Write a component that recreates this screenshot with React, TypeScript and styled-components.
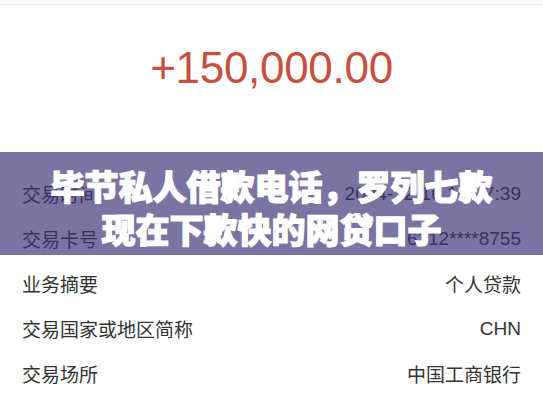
import React from 'react';
import styled, { createGlobalStyle } from 'styled-components';

type DetailRowType = {
  label: string;
  value: string;
};

const GlobalStyle = createGlobalStyle`
  html, body {
    margin: 0;
    padding: 0;
    overflow: hidden;
    background: #ffffff;
  }
`;

const Page = styled.div`
  position: relative;
  width: 543px;
  height: 408px;
  overflow: hidden;
  background: #ffffff;
  font-family: "Liberation Sans", "Noto Sans CJK SC", sans-serif;
`;

const TopBar = styled.div`
  height: 4px;
  border-bottom: 1px solid #ececec;
  background: #fbfbfb;
`;

const AmountSection = styled.div`
  height: 166px;
  box-sizing: border-box;
  padding-top: 41px;
  text-align: center;
`;

const Amount = styled.div`
  font-size: 44px;
  line-height: 44px;
  color: #c5503f;
  letter-spacing: -0.3px;
`;

const Details = styled.div`
  display: flex;
  flex-direction: column;
`;

const Row = styled.div`
  height: 45px;
  padding: 0 22px;
  display: flex;
  align-items: center;
  justify-content: space-between;
  font-size: 19px;
  color: #333333;
`;

const Label = styled.span`
  font-family: "Noto Sans CJK SC", sans-serif;
`;

const Value = styled.span`
  font-family: "Liberation Sans", "Noto Sans CJK SC", sans-serif;
`;

const Banner = styled.div`
  position: absolute;
  left: 0;
  right: 0;
  top: 152px;
  height: 103px;
  box-sizing: border-box;
  padding-top: 12px;
  background: rgba(61, 49, 117, 0.68);
  text-align: center;
`;

const BannerLine = styled.div`
  font-family: "Noto Sans CJK SC", sans-serif;
  font-weight: 900;
  font-size: 34px;
  line-height: 43px;
  color: #ffffff;
  -webkit-text-stroke: 1.2px #ffffff;
`;

const rows: DetailRowType[] = [
  { label: '交易时间', value: '2024-12-16 12:07:39' },
  { label: '交易卡号', value: '6212****8755' },
  { label: '业务摘要', value: '个人贷款' },
  { label: '交易国家或地区简称', value: 'CHN' },
  { label: '交易场所', value: '中国工商银行' },
  { label: '交易金额', value: '150,000.00' },
];

export default function App() {
  return (
    <>
      <GlobalStyle />
      <Page>
        <TopBar />
        <AmountSection>
          <Amount>+150,000.00</Amount>
        </AmountSection>
        <Details>
          {rows.map((row) => (
            <Row key={row.label}>
              <Label>{row.label}</Label>
              <Value>{row.value}</Value>
            </Row>
          ))}
        </Details>
        <Banner>
          <BannerLine>毕节私人借款电话，罗列七款</BannerLine>
          <BannerLine>现在下款快的网贷口子</BannerLine>
        </Banner>
      </Page>
    </>
  );
}
